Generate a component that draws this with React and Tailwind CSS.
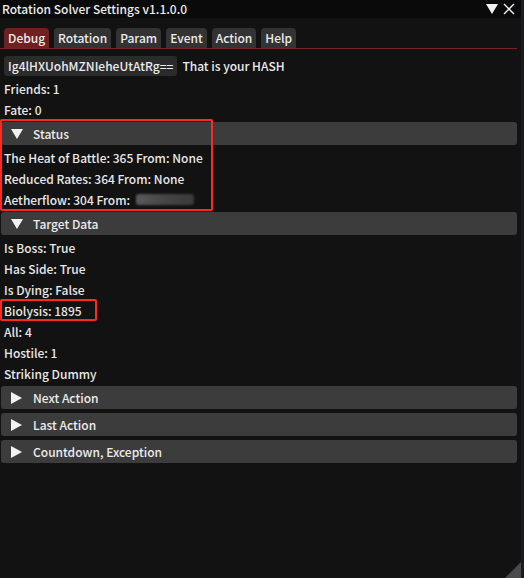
import React from "react";

const font = { fontFamily: '"Noto Sans CJK SC", "Noto Sans", sans-serif' };

const Line = ({ children }) => (
  <div className="h-[17px] flex items-center pl-[4px] text-[12px] font-medium text-[#e8e8e8] whitespace-nowrap">
    {children}
  </div>
);

const Header = ({ open, label }) => (
  <div className="h-[23px] mx-[1px] w-[516px] flex items-center rounded-[3px] bg-[#3c3c3c] text-[12px] font-medium text-[#ececec]">
    <span className="w-[32px] pl-[10px] flex items-center">
      {open ? (
        <svg width="12" height="10" viewBox="0 0 12 10">
          <polygon points="0,0 12,0 6,10" fill="#f2f2f2" />
        </svg>
      ) : (
        <svg width="11" height="12" viewBox="0 0 11 12">
          <polygon points="0,0 11,6 0,12" fill="#f2f2f2" />
        </svg>
      )}
    </span>
    <span>{label}</span>
  </div>
);

const tabs = ["Debug", "Rotation", "Param", "Event", "Action", "Help"];

export default function App() {
  return (
    <div className="w-[524px] h-[578px] bg-[#1c1c1e] overflow-hidden" style={font}>
      <div className="w-[521px] h-[578px] bg-[#121212] relative flex flex-col">
        {/* title bar */}
        <div className="h-[18px] bg-[#0a0a0a] flex items-center justify-between pl-[2px] pr-[6px]">
          <span className="text-[12px] font-medium text-[#ececec]">Rotation Solver Settings v1.1.0.0</span>
          <div className="flex items-center gap-[5px]">
            <svg width="12" height="10" viewBox="0 0 12 10">
              <polygon points="0,0 12,0 6,10" fill="#f2f2f2" />
            </svg>
            <svg width="12" height="12" viewBox="0 0 12 12">
              <path d="M1 1 L11 11 M11 1 L1 11" stroke="#f2f2f2" strokeWidth="1.4" />
            </svg>
          </div>
        </div>

        {/* tabs */}
        <div className="mt-[10px] flex gap-[5px] pl-[4px]">
          {tabs.map((t, i) => (
            <div
              key={t}
              className={`h-[20px] px-[4px] flex items-center rounded-t-[4px] text-[12px] font-medium text-[#ececec] ${i === 0 ? "bg-[#6f2121]" : "bg-[#333333]"}`}
            >
              {t}
            </div>
          ))}
        </div>
        <div className="h-[1px] w-[517px] bg-[#7a2222]" />

        {/* content */}
        <div className="mt-[7px] flex flex-col gap-[4px] relative">
          <div className="flex items-center h-[20px] pl-[4px] gap-[5px]">
            <div className="h-[20px] px-[4px] flex items-center rounded-[3px] bg-[#2b2b2b] text-[12px] font-medium text-[#ececec]">
              Ig4lHXUohMZNIeheUtAtRg==
            </div>
            <span className="text-[12px] font-medium text-[#ececec]">That is your HASH</span>
          </div>
          <Line>Friends: 1</Line>
          <Line>Fate: 0</Line>
          <Header open label="Status" />
          <Line>The Heat of Battle: 365 From: None</Line>
          <Line>Reduced Rates: 364 From: None</Line>
          <Line>
            Aetherflow: 304 From:
            <span className="ml-[6px] inline-block w-[58px] h-[11px] rounded-[3px] bg-gradient-to-r from-[#5a5a5a] via-[#454545] to-[#3a3a3a] blur-[1px]" />
          </Line>
          <Header open label="Target Data" />
          <Line>Is Boss: True</Line>
          <Line>Has Side: True</Line>
          <Line>Is Dying: False</Line>
          <Line>Biolysis: 1895</Line>
          <Line>All: 4</Line>
          <Line>Hostile: 1</Line>
          <Line>Striking Dummy</Line>
          <Header label="Next Action" />
          <Header label="Last Action" />
          <Header label="Countdown, Exception" />

          {/* annotation boxes */}
          <div className="absolute left-0 top-[63px] w-[213px] h-[92px] border-[2.5px] border-[#ff2a1f] rounded-[2px] pointer-events-none" />
          <div className="absolute left-0 top-[243px] w-[97px] h-[22px] border-[2.5px] border-[#ff2a1f] rounded-[2px] pointer-events-none" />
        </div>

        {/* resize grip */}
        <svg className="absolute right-0 bottom-0" width="16" height="16" viewBox="0 0 16 16">
          <polygon points="16,0 16,16 0,16" fill="#4a4a4a" />
        </svg>
      </div>
    </div>
  );
}
